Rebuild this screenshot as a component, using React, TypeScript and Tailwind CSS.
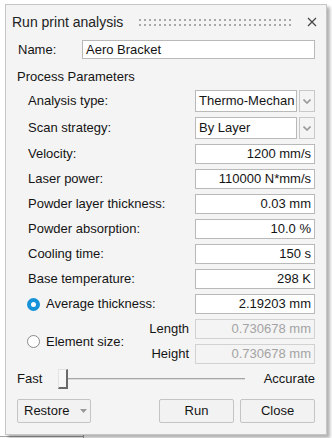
import React from "react";

const rows: { label: string; value: string }[] = [
  { label: "Velocity:", value: "1200 mm/s" },
  { label: "Laser power:", value: "110000 N*mm/s" },
  { label: "Powder layer thickness:", value: "0.03 mm" },
  { label: "Powder absorption:", value: "10.0 %" },
  { label: "Cooling time:", value: "150 s" },
  { label: "Base temperature:", value: "298 K" },
];

function Chevron() {
  return (
    <svg width="8" height="5" viewBox="0 0 8 5">
      <path d="M0.5 0.5 L4 4 L7.5 0.5" fill="none" stroke="#999" strokeWidth="1.6" />
    </svg>
  );
}

function Dropdown({ value }: { value: string }) {
  return (
    <div className="flex gap-[2px] h-[22px]">
      <div className="w-[102px] h-full bg-white border border-[#b9b9b9] pl-[3px] flex items-center overflow-hidden whitespace-nowrap">
        {value}
      </div>
      <div className="w-[16px] h-full border border-[#c8c8c8] bg-[#f4f4f4] flex items-center justify-center">
        <Chevron />
      </div>
    </div>
  );
}

function Field({ value, disabled }: { value: string; disabled?: boolean }) {
  return (
    <div
      className={`w-[120px] h-[20px] border pr-[3px] flex items-center justify-end whitespace-nowrap ${
        disabled ? "border-[#d2d2d2] bg-[#f4f4f4] text-[#a3a3a3]" : "border-[#b9b9b9] bg-white"
      }`}
    >
      {value}
    </div>
  );
}

function Button({ children, className }: { children: React.ReactNode; className?: string }) {
  return (
    <div
      className={`h-[24px] border border-[#c4c4c4] rounded-[2px] bg-[#f2f2f2] flex items-center justify-center ${className ?? ""}`}
    >
      {children}
    </div>
  );
}

export default function App() {
  return (
    <div className="relative w-[332px] h-[438px] bg-white overflow-hidden font-['Liberation_Sans',Arial,sans-serif] text-[13px] text-[#141414]">
      {/* window behind the dialog */}
      <div className="absolute left-0 top-[436px] w-[84px] h-px bg-[#a0a0a0]" />
      <div className="absolute left-[83px] top-[434px] w-px h-[4px] bg-[#a0a0a0]" />

      <div className="relative ml-[5px] mt-[4px] w-[322px] h-[431px] border border-[#c6c6c6] bg-[#f4f4f4] shadow-[3px_3px_3px_rgba(0,0,0,0.3)] flex flex-col">
        {/* Title bar */}
        <div className="h-[34px] flex items-center pl-[6px] pr-[9px]">
          <span className="text-[14px] text-[#222]">Run print analysis</span>
          <svg className="ml-[16px]" width="153" height="7">
            <defs>
              <pattern id="dots" width="5" height="5" patternUnits="userSpaceOnUse">
                <rect width="2" height="2" fill="#a8a8a8" />
              </pattern>
            </defs>
            <rect width="153" height="7" fill="url(#dots)" />
          </svg>
          <svg className="ml-auto" width="10" height="10" viewBox="0 0 10 10">
            <path d="M1 1 L9 9 M9 1 L1 9" stroke="#444" strokeWidth="1.2" />
          </svg>
        </div>

        {/* Name */}
        <div className="mt-px h-[19px] flex items-center pl-[12px]">
          <span className="w-[64px]">Name:</span>
          <div className="w-[233px] h-[19px] bg-white border border-[#b9b9b9] pl-[3px] flex items-center">
            Aero Bracket
          </div>
        </div>

        <div className="mt-[8px] h-[20px] flex items-center pl-[11px]">Process Parameters</div>

        <div className="mt-[3px] flex flex-col gap-[5px] pl-[22px]">
          <div className="flex items-center h-[22px]">
            <span className="w-[167px]">Analysis type:</span>
            <Dropdown value="Thermo-Mechan" />
          </div>
          <div className="flex items-center h-[22px]">
            <span className="w-[167px]">Scan strategy:</span>
            <Dropdown value="By Layer" />
          </div>
          {rows.map((r) => (
            <div key={r.label} className="flex items-center h-[20px]">
              <span className="w-[167px]">{r.label}</span>
              <Field value={r.value} />
            </div>
          ))}

          <div className="flex items-center h-[20px]">
            <div className="w-[13px] h-[13px] ml-[-1px] rounded-full border-[4px] border-[#1592d8] bg-white" />
            <span className="ml-[6px] w-[149px]">Average thickness:</span>
            <Field value="2.19203 mm" />
          </div>

          <div className="flex items-center">
            <div className="w-[13px] h-[13px] ml-[-1px] rounded-full border border-[#8a8a8a] bg-white" />
            <span className="ml-[6px] w-[104px]">Element size:</span>
            <div className="w-[39px] flex flex-col gap-[5px] items-end">
              <span className="h-[20px] flex items-center">Length</span>
              <span className="h-[20px] flex items-center">Height</span>
            </div>
            <div className="ml-[6px] flex flex-col gap-[5px]">
              <Field value="0.730678 mm" disabled />
              <Field value="0.730678 mm" disabled />
            </div>
          </div>
        </div>

        {/* Slider */}
        <div className="mt-[5px] h-[20px] flex items-center pl-[11px] pr-[11px]">
          <span className="w-[41px]">Fast</span>
          <div className="w-[10px] h-[20px] bg-[#f7f7f7] border-l border-t border-[#e2e2e2] border-r-2 border-r-[#6a6a6a] border-b-2 border-b-[#6a6a6a]" />
          <div className="w-[177px] flex flex-col">
            <div className="h-px bg-[#a6a6a6]" />
            <div className="h-px bg-[#dcdcdc]" />
          </div>
          <span className="ml-auto">Accurate</span>
        </div>

        {/* Buttons */}
        <div className="mt-[10px] flex items-center pl-[11px] pr-[11px]">
          <Button className="w-[74px] justify-start pl-[6px] gap-[10px]">
            <span>Restore</span>
            <svg width="7" height="4" viewBox="0 0 7 4">
              <path d="M0 0 L7 0 L3.5 4 Z" fill="#999" />
            </svg>
          </Button>
          <Button className="w-[75px] ml-auto">Run</Button>
          <Button className="w-[75px] ml-[6px]">Close</Button>
        </div>
      </div>
    </div>
  );
}
